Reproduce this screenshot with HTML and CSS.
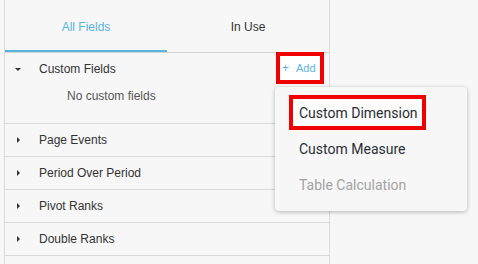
FILE: index.html
```html
<!DOCTYPE html>
<html>
<head>
<meta charset="utf-8">
<link rel="stylesheet" href="styles.css">
</head>
<body>
<div class="page">
  <div class="panel">
    <div class="tabs">
      <div class="tab active">All Fields</div>
      <div class="tab">In Use</div>
    </div>
    <div class="section open">
      <div class="sec-head">
        <span class="caret-down"></span>
        <span class="sec-title">Custom Fields</span>
        <button class="add-btn"><span class="plus">+</span>Add</button>
      </div>
      <div class="empty">No custom fields</div>
    </div>
    <div class="section"><div class="sec-head"><span class="caret-right"></span><span class="sec-title">Page Events</span></div></div>
    <div class="section"><div class="sec-head"><span class="caret-right"></span><span class="sec-title">Period Over Period</span></div></div>
    <div class="section"><div class="sec-head"><span class="caret-right"></span><span class="sec-title">Pivot Ranks</span></div></div>
    <div class="section"><div class="sec-head"><span class="caret-right"></span><span class="sec-title">Double Ranks</span></div></div>
  </div>
  <div class="menu">
    <div class="menu-item"><span class="label highlight">Custom Dimension</span></div>
    <div class="menu-item"><span class="label">Custom Measure</span></div>
    <div class="menu-item disabled"><span class="label">Table Calculation</span></div>
  </div>
</div>
</body>
</html>
```
FILE: styles.css
```css
html, body {
  margin: 0;
  padding: 0;
  background: #f7f7f7;
  width: 478px;
  height: 264px;
  overflow: hidden;
}
.page {
  position: relative;
  height: 264px;
  font-family: "Liberation Sans", Arial, sans-serif;
  color: #333;
}
.panel {
  margin-left: 4px;
  width: 324px;
  height: 264px;
  border-left: 1px solid #dcdcdc;
  border-right: 1px solid #dcdcdc;
  background: #f7f7f7;
}
.tabs {
  display: flex;
  border-bottom: 1px solid #d4d4d4;
}
.tab {
  flex: 1;
  box-sizing: border-box;
  height: 52px;
  padding-top: 4px;
  border-bottom: 2px solid transparent;
  display: flex;
  align-items: center;
  justify-content: center;
  font-size: 12px;
}
.tab.active {
  color: #5cb4dc;
  border-bottom-color: #5cb4dc;
}
.section {
  border-bottom: 1px solid #d9d9d9;
}
.section.open {
  height: 70px;
}
.sec-head {
  display: flex;
  align-items: center;
  height: 32px;
  padding-left: 10px;
  font-size: 12px;
}
.section.open .sec-head {
  height: 31px;
}
.caret-down {
  width: 0;
  height: 0;
  border-left: 3px solid transparent;
  border-right: 3px solid transparent;
  border-top: 3px solid #333;
  margin-right: 18px;
  margin-top: 1px;
}
.caret-right {
  width: 0;
  height: 0;
  border-top: 3px solid transparent;
  border-bottom: 3px solid transparent;
  border-left: 3px solid #333;
  margin-left: 2px;
  margin-right: 19px;
}
.sec-title {
  flex: 1;
}
.add-btn {
  box-sizing: border-box;
  width: 48px;
  height: 32px;
  margin-top: -1px;
  margin-right: 5px;
  border: 4px solid #f00000;
  background: #fff;
  color: #5cb4dc;
  font-family: "Liberation Sans", Arial, sans-serif;
  font-size: 11px;
  padding: 0 0 0 2px;
  display: flex;
  align-items: center;
  cursor: pointer;
}
.plus {
  font-size: 12px;
  margin-right: 7px;
}
.empty {
  padding-left: 62px;
  font-size: 12px;
  color: #555;
  line-height: 14px;
  margin-top: 5px;
}
.menu {
  position: absolute;
  left: 275px;
  top: 87px;
  width: 192px;
  box-sizing: border-box;
  padding: 8px 0;
  background: #f7f7f7;
  border-radius: 4px;
  box-shadow: 0 1px 4px rgba(0, 0, 0, 0.28);
  font-family: Roboto, "Noto Sans", sans-serif;
  font-size: 14px;
  color: #2a2f35;
}
.menu-item {
  height: 36px;
  display: flex;
  align-items: center;
  padding-left: 14px;
}
.label {
  box-sizing: border-box;
  border: 4px solid transparent;
  height: 35px;
  padding: 0 4px 0 6px;
  display: flex;
  align-items: center;
}
.label.highlight {
  border-color: #f00000;
  background: #fbfbfb;
  margin-top: -1px;
}
.menu-item.disabled {
  color: #a3a3a3;
}
```
